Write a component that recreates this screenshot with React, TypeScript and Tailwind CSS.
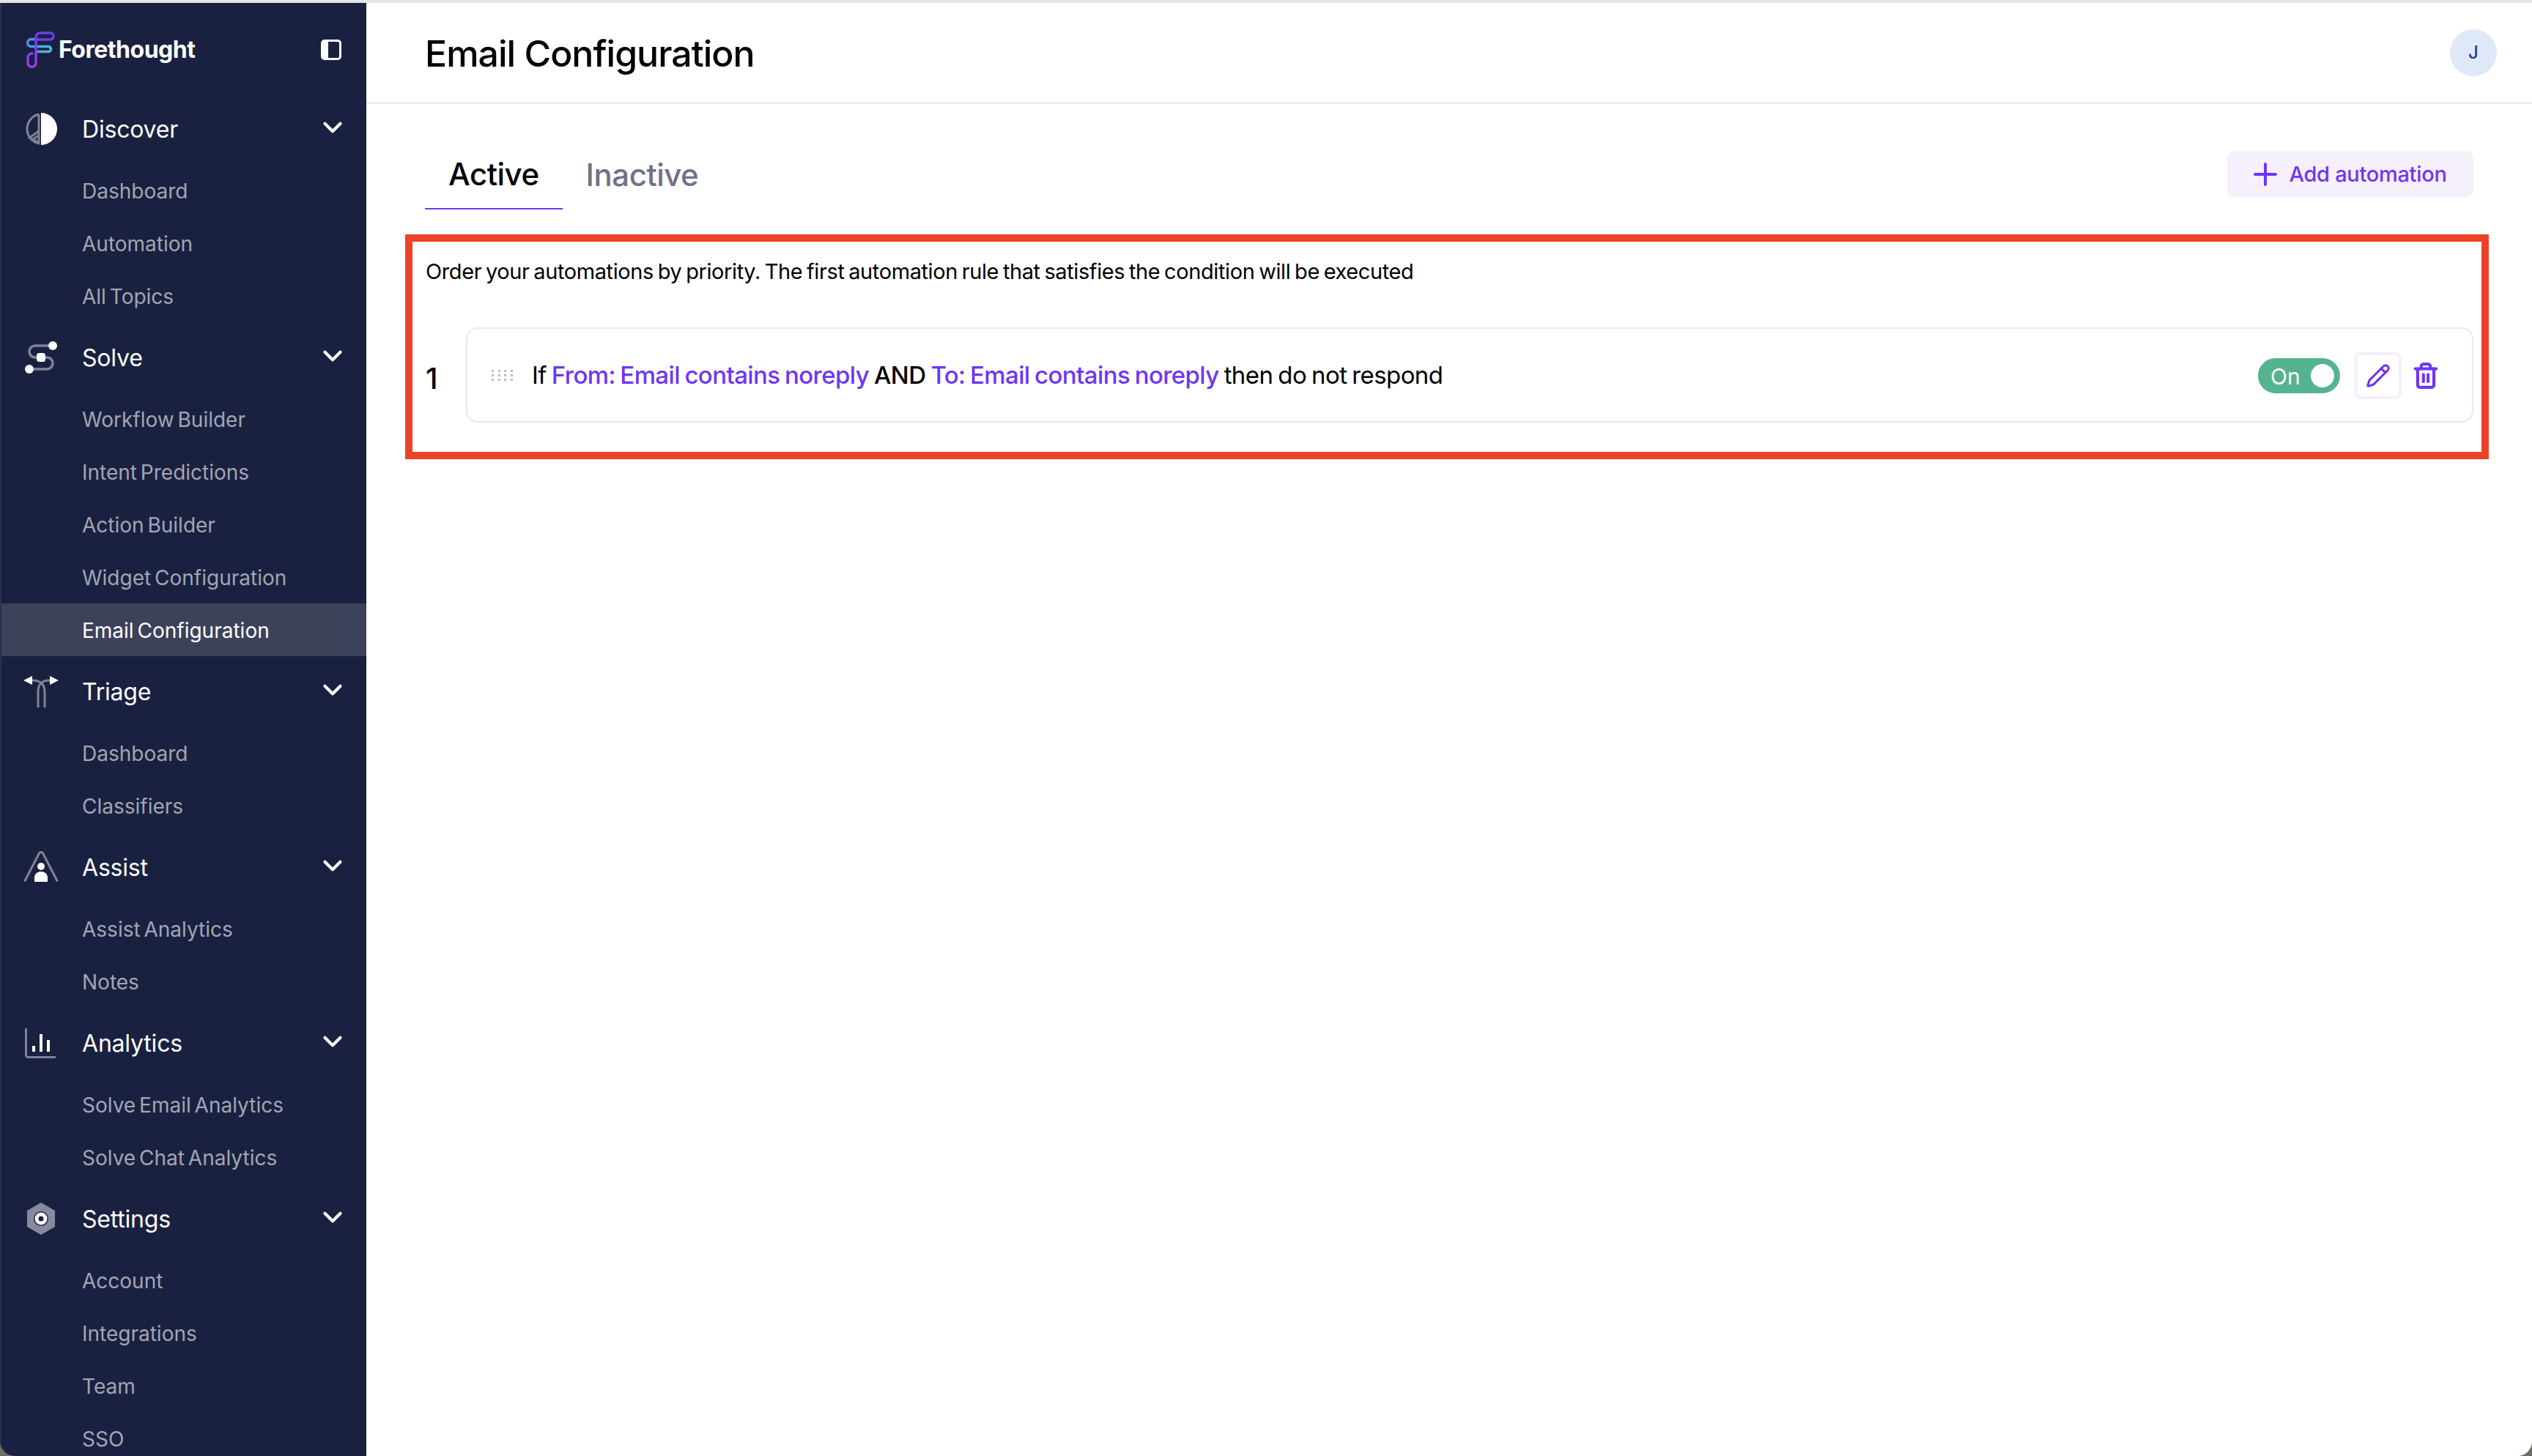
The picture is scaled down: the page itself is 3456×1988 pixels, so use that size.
import React from 'react';
import { ChevronDown, Pencil, Trash2 } from 'lucide-react';

const Logo = () => (
  <svg width="40" height="52" viewBox="35 42 40 52" fill="none" strokeWidth="3.4" strokeLinecap="round">
    <defs>
      <linearGradient id="ftPurple" x1="0" y1="0" x2="0" y2="1">
        <stop offset="0" stopColor="#6a3cf0" />
        <stop offset="1" stopColor="#a03cf0" />
      </linearGradient>
      <linearGradient id="ftBlue" x1="0" y1="0" x2="1" y2="0">
        <stop offset="0" stopColor="#4a90e8" />
        <stop offset="1" stopColor="#45c0dc" />
      </linearGradient>
    </defs>
    <path d="M50 53.5H42.5a5 5 0 0 0 0 10H66a3.5 3.5 0 0 1 0 7H50" stroke="url(#ftBlue)" />
    <path d="M44 73a5.5 5.5 0 0 0-6 5.500V86a5.500 5.500 0 0 0 11 0V51a6 6 0 0 1 6-6h13.500a4.500 4.500 0 0 1 0 9H50" stroke="url(#ftPurple)" />
  </svg>
);

const gray = '#7f8398';

const DiscoverIcon = () => (
  <svg width="48" height="48" viewBox="0 0 48 48" fill="none">
    <path d="M24 2A22 22 0 0 1 24 46Z" fill="#fff" />
    <path d="M21 4A20.500 20.500 0 0 0 21 44V4M21 27L7 37M21 33V43L13 38Z" stroke={gray} strokeWidth="3" strokeLinejoin="round" />
  </svg>
);

const SolveIcon = () => (
  <svg width="48" height="48" viewBox="0 0 48 48" fill="none">
    <path d="M34 8H16a8 8 0 0 0 0 16H32a8 8 0 0 1 0 16H14" stroke={gray} strokeWidth="3.500" />
    <circle cx="40" cy="8" r="6" fill="#fff" />
    <rect x="18" y="18" width="12" height="12" rx="3.500" fill="#fff" />
    <circle cx="8" cy="40" r="6" fill="#fff" />
  </svg>
);

const TriageIcon = () => (
  <svg width="48" height="48" viewBox="0 0 48 48" fill="none">
    <path d="M12 9h1C22 9 29 14 29 24V46M36 9h-1C26 9 20 14 20 24V46" stroke={gray} strokeWidth="3" />
    <path d="M0 9L12 3V15ZM48 9L36 3V15Z" fill="#fff" />
  </svg>
);

const AssistIcon = () => (
  <svg width="48" height="48" viewBox="0 0 48 48" fill="none">
    <path d="M1.500 43.500L21.500 5a2.800 2.800 0 0 1 5 0L46.500 43.500" stroke={gray} strokeWidth="3" />
    <circle cx="24" cy="23" r="5" fill="#fff" />
    <path d="M15 44V38a9 8 0 0 1 18 0V44Z" fill="#fff" />
  </svg>
);

const AnalyticsIcon = () => (
  <svg width="48" height="48" viewBox="0 0 48 48" fill="none">
    <path d="M3.500 4V40.500a3 3 0 0 0 3 3H44" stroke={gray} strokeWidth="3" />
    <path d="M12 28h4v8h-4ZM22 12h4v24h-4ZM32 20h4v16h-4Z" fill="#fff" />
  </svg>
);

const SettingsIcon = () => (
  <svg width="48" height="48" viewBox="0 0 48 48" fill="none">
    <path d="M24 2L43 13V35L24 46L5 35V13Z" fill="#868a9e" />
    <circle cx="24" cy="24" r="10" fill="#1a2140" />
    <circle cx="24" cy="24" r="8.500" fill="#fff" />
    <circle cx="24" cy="24" r="3.500" fill="#1a2140" />
  </svg>
);

const PanelIcon = () => (
  <svg width="28" height="28" viewBox="0 0 28 28" fill="none">
    <rect x="1.500" y="1.500" width="25" height="25" rx="3.500" stroke="#fff" strokeWidth="3" />
    <path d="M5 1.500H10V26.500H5a3.500 3.500 0 0 1-3.500-3.500V5A3.500 3.500 0 0 1 5 1.500Z" fill="#fff" />
  </svg>
);

const PlusIcon = () => (
  <svg width="32" height="32" viewBox="0 0 32 32" fill="none" stroke="currentColor" strokeWidth="4" strokeLinecap="round">
    <path d="M16 2V30M2 16H30" />
  </svg>
);

const navSections = [
  { label: 'Discover', icon: <DiscoverIcon />, items: ['Dashboard', 'Automation', 'All Topics'] },
  {
    label: 'Solve',
    icon: <SolveIcon />,
    items: ['Workflow Builder', 'Intent Predictions', 'Action Builder', 'Widget Configuration', 'Email Configuration'],
  },
  { label: 'Triage', icon: <TriageIcon />, items: ['Dashboard', 'Classifiers'] },
  { label: 'Assist', icon: <AssistIcon />, items: ['Assist Analytics', 'Notes'] },
  { label: 'Analytics', icon: <AnalyticsIcon />, items: ['Solve Email Analytics', 'Solve Chat Analytics'] },
  { label: 'Settings', icon: <SettingsIcon />, items: ['Account', 'Integrations', 'Team', 'SSO'] },
];

const Sidebar = () => (
  <aside className="w-[500px] shrink-0 bg-[#1a2140] border-l-2 border-[#2a3150] overflow-hidden">
    <div className="h-[124px] flex items-center justify-between pl-[33px] pr-[34px] pt-[4px]">
      <div className="flex items-center gap-[5px]">
        <Logo />
        <span className="text-[32px] font-bold text-white tracking-[-0.5px]">Forethought</span>
      </div>
      <PanelIcon />
    </div>

    {navSections.map((section) => (
      <div key={section.label}>
        <div className="h-[96px] flex items-center pl-[30px] pr-[25px]">
          <span className="w-12 h-12 shrink-0">{section.icon}</span>
          <span className="ml-[32px] mt-[2px] text-[32px] text-white font-normal tracking-[-0.2px]">{section.label}</span>
          <ChevronDown className="ml-auto text-white -mt-[4px]" size={42} strokeWidth={2.4} />
        </div>
        {section.items.map((item) => (
          <div
            key={item}
            className={
              item === 'Email Configuration'
                ? 'h-[72px] flex items-center pl-[110px] pt-[2px] text-[28px] [word-spacing:-3px] bg-[#3c4259] text-white'
                : 'h-[72px] flex items-center pl-[110px] pt-[2px] text-[28px] [word-spacing:-3px] text-[#a2a5b4]'
            }
          >
            {item}
          </div>
        ))}
      </div>
    ))}
  </aside>
);

const DragDots = () => (
  <div className="grid grid-cols-4 gap-x-[6px] gap-y-[3px] w-[28px]">
    {Array.from({ length: 12 }).map((_, i) => (
      <span key={i} className="w-[3px] h-[3px] bg-[#b9bbc6]" />
    ))}
  </div>
);

const AutomationRow = () => (
  <div className="flex items-center">
    <span className="w-[55px] text-[40px] leading-none font-medium text-black mt-[10px]">1</span>
    <div className="flex-1 h-[130px] border-2 border-[#e9e9ec] rounded-[16px] flex items-center pl-[33px] pr-[44px]">
      <DragDots />
      <p className="ml-[27px] mt-[2px] text-[33px] text-black tracking-[-0.6px] [word-spacing:-1.7px]">
        If <span className="text-[#6f35f5] font-medium">From: Email contains noreply</span>{' '}
        <span className="font-medium">AND</span>{' '}
        <span className="text-[#6f35f5] font-medium">To: Email contains noreply</span> then do not respond
      </p>
      <div className="ml-auto mt-[2px] flex items-center">
        <div className="w-[112px] h-[48px] rounded-full bg-[#55b48f] flex items-center justify-between pl-[17px] pr-[8px]">
          <span className="text-[30px] text-white mt-[2px]">On</span>
          <span className="w-[32px] h-[32px] rounded-full bg-white" />
        </div>
        <button className="ml-[20px] w-[64px] h-[64px] rounded-[8px] border-4 border-[#f5f0fc] flex items-center justify-center text-[#6f35f5]">
          <Pencil size={34} strokeWidth={2.2} />
        </button>
        <Trash2 className="ml-[14px] text-[#6f35f5]" size={38} strokeWidth={2.6} />
      </div>
    </div>
  </div>
);

const App = () => {
  return (
    <div className="w-full h-screen bg-[#6e6e66] overflow-hidden font-['Inter',sans-serif]">
      <div className="h-full flex flex-col bg-white rounded-b-[20px] overflow-hidden">
        <div className="h-[4px] shrink-0 bg-[#e4e4e6]" />
        <div className="flex flex-1 min-h-0">
          <Sidebar />
          <main className="flex-1 min-w-0">
            <header className="h-[138px] border-b-2 border-[#e8e8ee] flex items-center justify-between pl-[80px] pr-[48px]">
              <h1 className="text-[50px] font-medium text-black tracking-[-1px] pt-[2px]">Email Configuration</h1>
              <div className="w-[64px] h-[64px] rounded-full bg-[#dfe8f7] text-[#1f3a93] text-[24px] font-medium flex items-center justify-center">
                J
              </div>
            </header>

            <div className="pl-[80px] pr-[80px] pt-[54px] flex items-start justify-between">
              <div className="flex">
                <div className="h-[90px] px-[32px] flex items-center border-b-2 border-[#6f35f5] text-[42px] font-medium text-black tracking-[-0.5px] pb-[6px]">
                  Active
                </div>
                <div className="h-[90px] px-[32px] flex items-center text-[42px] font-medium text-[#6f7287] tracking-[-0.5px] pb-[6px]">
                  Inactive
                </div>
              </div>
              <button className="mt-[10px] w-[336px] h-[63px] rounded-[10px] bg-[#f5f0fc] text-[#6f35f5] flex items-center justify-center gap-[16px] text-[29px] font-medium tracking-[-0.3px]">
                <PlusIcon />
                Add automation
              </button>
            </div>

            <section className="ml-[53px] mr-[59px] mt-[34px] h-[307px] border-[10px] border-[#ec4226] pl-[18px] pr-[11px]">
              <p className="pt-[19px] h-[117px] text-[29px] text-black tracking-[-0.4px] [word-spacing:-2px]">
                Order your automations by priority. The first automation rule that satisfies the condition will be executed
              </p>
              <AutomationRow />
            </section>
          </main>
        </div>
      </div>
    </div>
  );
};

export default App;
